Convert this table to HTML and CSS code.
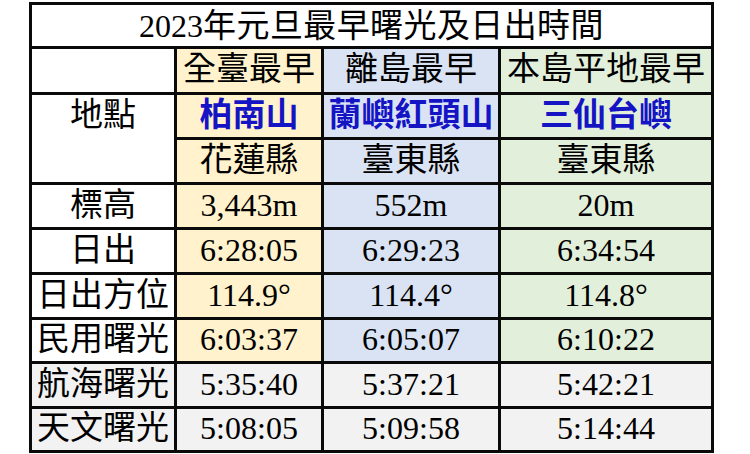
FILE: index.html
```html
<!DOCTYPE html>
<html lang="zh-Hant">
<head>
<meta charset="utf-8">
<title>2023年元旦最早曙光及日出時間</title>
<link rel="stylesheet" href="styles.css">
</head>
<body>
<div class="sheet">
  <div class="cell title"><span class="title-text"><span class="title-num">2023</span>年元旦最早曙光及日出時間</span></div>

  <div class="cell label"></div>
  <div class="cell c-gold cjk">全臺最早</div>
  <div class="cell c-blue cjk">離島最早</div>
  <div class="cell c-green cjk">本島平地最早</div>

  <div class="cell label place"><span class="place-text cjk">地點</span></div>
  <div class="cell c-gold cjk site">柏南山</div>
  <div class="cell c-blue cjk site">蘭嶼紅頭山</div>
  <div class="cell c-green cjk site">三仙台嶼</div>

  <div class="cell c-gold cjk">花蓮縣</div>
  <div class="cell c-blue cjk">臺東縣</div>
  <div class="cell c-green cjk">臺東縣</div>

  <div class="cell label cjk">標高</div>
  <div class="cell c-gold num">3,443m</div>
  <div class="cell c-blue num">552m</div>
  <div class="cell c-green num">20m</div>

  <div class="cell label cjk">日出</div>
  <div class="cell c-gold num">6:28:05</div>
  <div class="cell c-blue num">6:29:23</div>
  <div class="cell c-green num">6:34:54</div>

  <div class="cell label cjk">日出方位</div>
  <div class="cell c-gold num">114.9°</div>
  <div class="cell c-blue num">114.4°</div>
  <div class="cell c-green num">114.8°</div>

  <div class="cell label cjk">民用曙光</div>
  <div class="cell c-gold num">6:03:37</div>
  <div class="cell c-blue num">6:05:07</div>
  <div class="cell c-green num">6:10:22</div>

  <div class="cell c-gray cjk">航海曙光</div>
  <div class="cell c-gray num">5:35:40</div>
  <div class="cell c-gray num">5:37:21</div>
  <div class="cell c-gray num">5:42:21</div>

  <div class="cell c-gray cjk">天文曙光</div>
  <div class="cell c-gray num">5:08:05</div>
  <div class="cell c-gray num">5:09:58</div>
  <div class="cell c-gray num">5:14:44</div>
</div>
</body>
</html>
```

FILE: styles.css
```css
html, body {
  margin: 0;
  padding: 0;
  background: #ffffff;
}

body {
  padding: 2px 0 0 29px;
  font-family: "Liberation Serif", "Noto Sans CJK TC", serif;
  color: #000;
}

.sheet {
  display: grid;
  width: 679px;
  grid-template-columns: 142px 144px 174px 210px;
  grid-template-rows: 41px 43px 42px 42px 42px 42px 42px 41px 42px 41px;
  gap: 3px;
  padding: 3px;
  background: #0a0a0a;
}

.cell {
  display: flex;
  align-items: center;
  justify-content: center;
  background: #ffffff;
  font-size: 32px;
  line-height: 1;
  white-space: nowrap;
}

.title {
  grid-column: 1 / span 4;
  padding-bottom: 3px;
}

.title-text {
  font-family: "Noto Sans CJK TC", sans-serif;
  font-size: 33px;
  line-height: 1;
  letter-spacing: 0.4px;
}

.title-num {
  font-family: "Liberation Serif", serif;
  font-size: 32px;
  letter-spacing: 0;
}

.cjk {
  font-family: "Noto Sans CJK TC", sans-serif;
  font-size: 33px;
  padding-bottom: 8px;
}

.num {
  font-family: "Liberation Serif", serif;
  font-size: 32px;
  padding-bottom: 3px;
}

.site {
  color: #1414c4;
  font-weight: 700;
}

.place {
  grid-row: span 2;
  align-items: flex-start;
  padding-bottom: 0;
}

.place-text {
  display: flex;
  align-items: center;
  height: 34px;
}

.label { background: #ffffff; }
.c-gold { background: #fff2cc; }
.c-blue { background: #dae3f3; }
.c-green { background: #e2efda; }
.c-gray { background: #f2f2f2; }
```
